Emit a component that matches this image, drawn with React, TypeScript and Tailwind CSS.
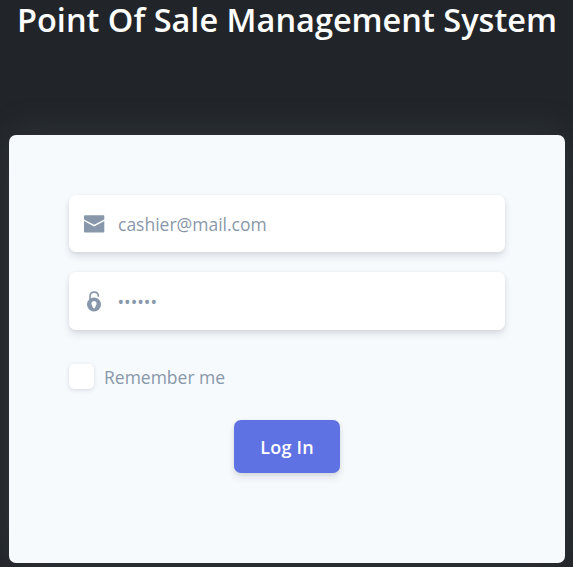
export default function App() {
  return (
    <main className="h-[567px] w-[573px] overflow-hidden bg-[#212529] px-[9px] font-['Open_Sans',sans-serif] text-[17.5px] text-[#8898aa]">
      <h1 className="h-[135px] pl-px text-center text-[32.5px] leading-[40px] font-semibold whitespace-nowrap text-white">
        Point Of Sale Management System
      </h1>
      <form className="flex h-[428px] w-[556px] flex-col rounded-[7px] bg-[#f7fafc] px-[60px] pt-[60px] shadow-[0_0_40px_0_rgba(136,152,170,0.15)]">
        <label className="flex h-[57px] shrink-0 items-center rounded-[7px] bg-white pl-[15px] shadow-[0_5px_7.5px_rgba(50,50,93,0.11),0_1px_4px_rgba(0,0,0,0.08)]">
          <svg className="h-[18px] w-[21px] shrink-0" viewBox="0 0 21 18" fill="currentColor" aria-hidden="true">
            <path d="M1 .3h18.6q.7 0 .7.7v3.4L10.2 9.7 0 4.4V1Q0 .3 1 .3Z" />
            <path d="M0 6.1 10.2 11.4 20.3 6.1v10.5q0 .9-.9.9H.9q-.9 0-.9-.9Z" />
          </svg>
          <span className="ml-[13px] pt-[2px]">cashier@mail.com</span>
        </label>
        <label className="mt-[20px] flex h-[58px] shrink-0 items-center rounded-[7px] bg-white pl-[18px] shadow-[0_5px_7.5px_rgba(50,50,93,0.11),0_1px_4px_rgba(0,0,0,0.08)]">
          <svg className="h-[21px] w-[15px] shrink-0" viewBox="0 0 15 21" aria-hidden="true">
            <path d="M3 8V5.2C3 2.5 4.7 1.1 7.2 1.1s4.1 1.5 4.1 4.2" fill="none" stroke="currentColor" strokeWidth="1.6" strokeLinecap="round" />
            <path fill="currentColor" fillRule="evenodd" d="M7 6.6a7 6.9 0 1 1 0 13.8A7 6.9 0 0 1 7 6.6Zm0 3.3a2.6 2.6 0 0 0-2 4.3l.9 2.4q.2.6.7.6h.8q.5 0 .7-.6l.9-2.4A2.6 2.6 0 0 0 7 9.9Z" />
          </svg>
          <span className="ml-[15.5px] pt-[2px]">••••••</span>
        </label>
        <div className="mt-[34px] flex h-[26px] shrink-0 items-center">
          <span className="mb-px size-[25px] rounded-[5px] bg-white shadow-[0_1px_4px_rgba(50,50,93,0.15),0_1px_0_rgba(0,0,0,0.02)]" />
          <span className="ml-[10px]">Remember me</span>
        </div>
        <button type="button" className="mt-[30px] h-[53px] w-[106px] shrink-0 self-center rounded-[7px] bg-[#5e72e4] pt-[2px] text-[18px] font-semibold tracking-[0.2px] text-white shadow-[0_5px_7.5px_rgba(50,50,93,0.11),0_1px_4px_rgba(0,0,0,0.08)]">
          Log In
        </button>
      </form>
    </main>
  );
}
